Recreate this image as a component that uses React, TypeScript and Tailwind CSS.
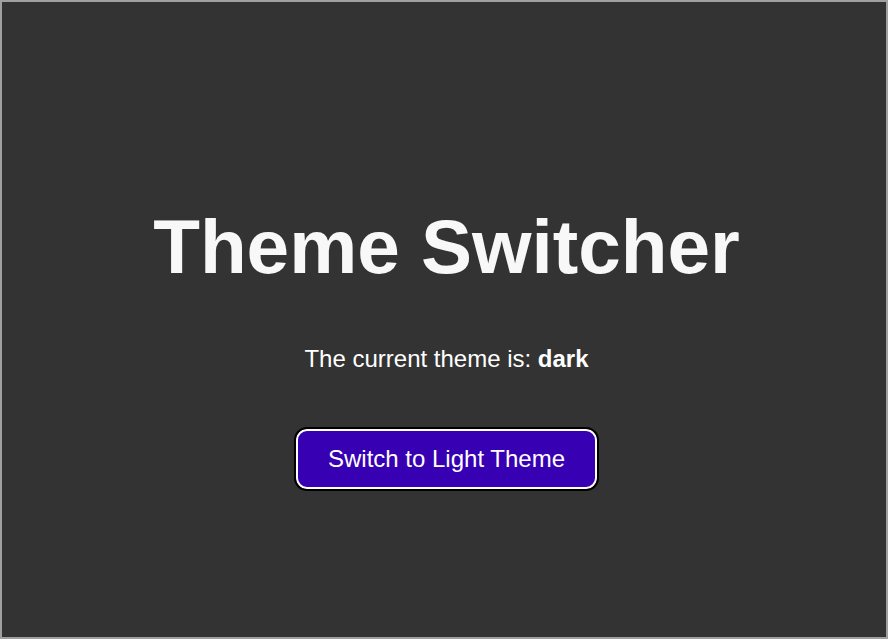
export default function App() {
  return (
    <div className="h-[639px] w-full border-2 border-[#a0a0a0] bg-[#333333] pl-[5px] flex flex-col items-center" style={{ fontFamily: '"Liberation Sans", Arial, sans-serif' }}>
      <h1 className="mt-[201px] text-[76.5px] leading-[1.15] font-bold text-[#f8f8f8]">Theme Switcher</h1>
      <p className="mt-[54px] text-[24px] leading-[1.15] text-white">
        The current theme is: <strong className="font-bold">dark</strong>
      </p>
      <button className="mt-[56px] rounded-[11px] border-2 border-white bg-[#3700b3] px-[29.5px] py-[14.4px] text-[24px] leading-[1.15] text-white outline-2 outline-black">
        Switch to Light Theme
      </button>
    </div>
  );
}
